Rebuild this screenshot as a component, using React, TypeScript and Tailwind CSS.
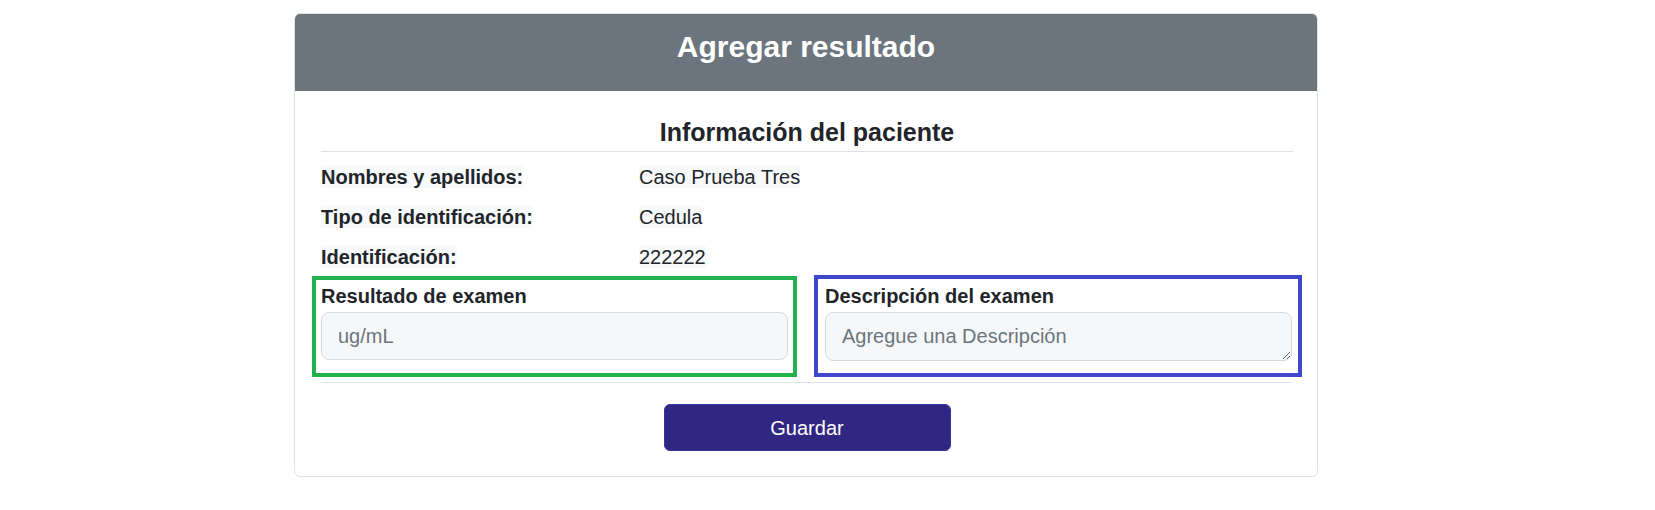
const patient = [
  { label: "Nombres y apellidos:", value: "Caso Prueba Tres" },
  { label: "Tipo de identificación:", value: "Cedula" },
  { label: "Identificación:", value: "222222" },
];

const App = () => {
  return (
    <div className="min-h-[510px] bg-white pt-[13px] font-['Liberation_Sans',Arial,sans-serif] text-[#212529]">
      <div className="ml-[294px] w-[1024px] overflow-hidden rounded-md border border-[#dee2e6] bg-white">
        <div className="bg-[#6c757d] pt-[15px] pb-[26px] text-center">
          <h3 className="text-[30px] font-bold leading-[36px] text-white">Agregar resultado</h3>
        </div>

        <div className="pt-[26px] pb-[25px] pl-[26px] pr-[24px]">
          <h4 className="border-b border-[#dee2e6] pb-1 text-center text-[25px] font-bold leading-[30px]">
            Información del paciente
          </h4>

          <div className="mt-[10px] flex flex-col gap-[10px]">
            {patient.map((row) => (
              <div key={row.label} className="flex text-[20px] leading-[30px]">
                <div className="w-[318px]">
                  <span className="bg-[#f8f9fa] font-bold">{row.label}</span>
                </div>
                <div>
                  <span className="bg-[#f8f9fa]">{row.value}</span>
                </div>
              </div>
            ))}
          </div>

          <div className="-mx-[9px] mt-[3px] flex items-start gap-[17px]">
            <div className="mt-[1px] w-[485px] border-4 border-[#22b14c] pt-[1px] pr-[5px] pb-[13px] pl-[5px]">
              <label className="block text-[20px] font-bold leading-[30px]">Resultado de examen</label>
              <input
                className="mt-[1px] block h-[48px] w-full rounded-lg border border-[#d5d9dd] bg-[#f6f7f8] px-4 text-[20px] text-[#212529] outline-none placeholder:text-[#6c757d]"
                placeholder="ug/mL"
              />
            </div>
            <div className="w-[488px] border-4 border-[#3f48cc] pt-[2px] pr-[6px] pb-[12px] pl-[7px]">
              <label className="block text-[20px] font-bold leading-[30px]">Descripción del examen</label>
              <textarea
                rows={1}
                className="mt-[1px] block h-[49px] w-full rounded-lg border border-[#d5d9dd] bg-[#f6f7f8] px-4 py-2 text-[20px] leading-[30px] text-[#212529] outline-none placeholder:text-[#6c757d]"
                placeholder="Agregue una Descripción"
              />
            </div>
          </div>

          <div className="mt-[5px] border-t border-[#dee2e6]" />

          <div className="mt-[21px] flex justify-center">
            <button className="h-[47px] w-[287px] rounded-md border border-[#2e3a9f] bg-[#312783] text-[20px] text-white">
              Guardar
            </button>
          </div>
        </div>
      </div>
    </div>
  );
};

export default App;
